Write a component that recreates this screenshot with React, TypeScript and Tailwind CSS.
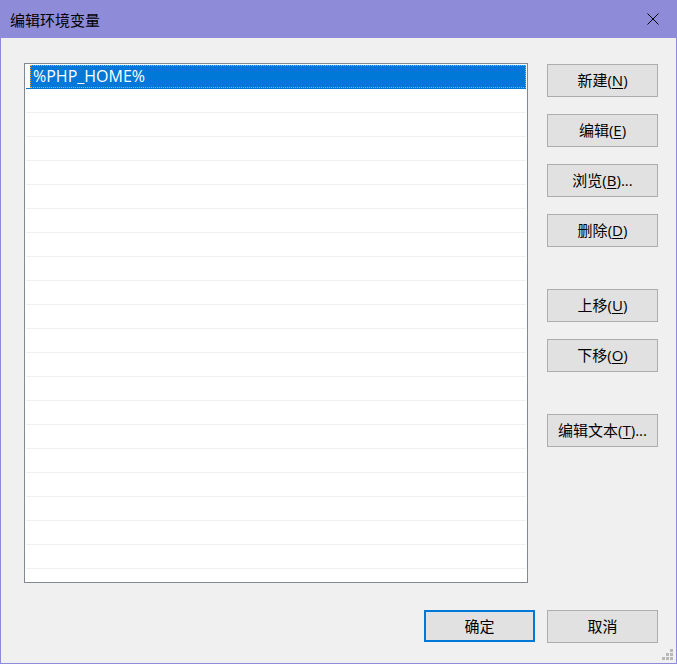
const font = { fontFamily: '"Segoe UI", "Open Sans", "Noto Sans CJK SC", sans-serif' };

function Btn({ label, hotkey, after = "", primary = false, w = "w-[111px]" }: { label: string; hotkey?: string; after?: string; primary?: boolean; w?: string }) {
    return (
        <button
            className={
                primary
                    ? `${w} h-[32px] bg-[#e1e1e1] border-2 border-[#0078d7] text-[15px] text-black flex items-center justify-center`
                    : `${w} h-[33px] bg-[#e1e1e1] border border-[#adadad] text-[15px] text-black flex items-center justify-center`
            }
        >
            <span>
                {label}
                {hotkey && (
                    <>
                        (<span className="underline underline-offset-2">{hotkey}</span>)
                    </>
                )}
                {after}
            </span>
        </button>
    );
}

export default function App() {
    const rows = Array.from({ length: 21 });

    return (
        <div className="w-[677px] h-[664px] bg-[#8e8bd8] p-[1px] pt-0 flex flex-col text-black" style={font}>
            {/* Title bar */}
            <div className="h-[38px] flex items-center justify-between pl-[9px] pr-[17px]">
                <span className="text-[15px] leading-none" style={{ fontFamily: '"Noto Sans CJK SC", sans-serif' }}>
                    编辑环境变量
                </span>
                <svg width="12" height="12" viewBox="0 0 12 12">
                    <path d="M0.5 0.5 L11.5 11.5 M11.5 0.5 L0.5 11.5" stroke="#000" strokeWidth="1" />
                </svg>
            </div>

            {/* Body */}
            <div className="flex-1 bg-[#f0f0f0] relative flex flex-col">
                <div className="flex pt-[25px] pl-[23px]">
                    {/* List */}
                    <div className="w-[504px] h-[520px] bg-white border border-[#828790] pt-[1px] pl-[1px] pr-[1px] overflow-hidden">
                        {rows.map((_, i) =>
                            i === 0 ? (
                                <div key={i} className="h-[24px] border-b border-[#0078d7] pl-[4px]">
                                    <div className="h-full bg-[#0078d7] border border-dotted border-[#f0a040] text-white text-[16px] leading-[21px] pl-[2px]">
                                        %PHP_HOME%
                                    </div>
                                </div>
                            ) : (
                                <div key={i} className="h-[24px] border-b border-[#f0f0f0]" />
                            )
                        )}
                    </div>

                    {/* Side buttons */}
                    <div className="ml-[19px] flex flex-col">
                        <div className="mt-[1px]">
                            <Btn label="新建" hotkey="N" />
                        </div>
                        <div className="mt-[17px]">
                            <Btn label="编辑" hotkey="E" />
                        </div>
                        <div className="mt-[17px]">
                            <Btn label="浏览" hotkey="B" after="..." />
                        </div>
                        <div className="mt-[17px]">
                            <Btn label="删除" hotkey="D" />
                        </div>
                        <div className="mt-[42px]">
                            <Btn label="上移" hotkey="U" />
                        </div>
                        <div className="mt-[17px]">
                            <Btn label="下移" hotkey="O" />
                        </div>
                        <div className="mt-[42px]">
                            <Btn label="编辑文本" hotkey="T" after="..." />
                        </div>
                    </div>
                </div>

                {/* Bottom buttons */}
                <div className="flex justify-end gap-[12px] pr-[18px] mt-[27px]">
                    <Btn label="确定" primary w="w-[111px]" />
                    <Btn label="取消" />
                </div>

                {/* Size grip */}
                <svg className="absolute right-[2px] bottom-[2px]" width="12" height="12" viewBox="0 0 12 12">
                    <g fill="#b8b8b8">
                        <rect x="8" y="0" width="3" height="3" />
                        <rect x="4" y="4" width="3" height="3" />
                        <rect x="8" y="4" width="3" height="3" />
                        <rect x="0" y="8" width="3" height="3" />
                        <rect x="4" y="8" width="3" height="3" />
                        <rect x="8" y="8" width="3" height="3" />
                    </g>
                </svg>
            </div>
        </div>
    );
}
